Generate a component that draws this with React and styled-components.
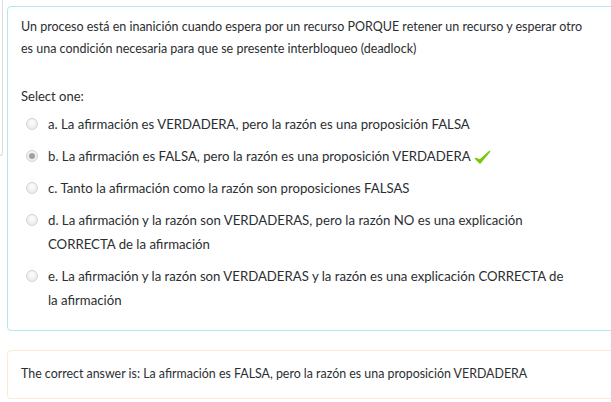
import React from 'react';
import styled, { createGlobalStyle } from 'styled-components';

const GlobalStyle = createGlobalStyle`
  html, body {
    margin: 0;
    padding: 0;
    background: #fff;
  }
  body {
    font-family: Lato, "Noto Sans", sans-serif;
    font-size: 13px;
    color: #2b2e31;
  }
`;

const Page = styled.div`
  display: flex;
  align-items: flex-start;
  width: 640px;
`;

const InfoEdge = styled.div`
  flex: 0 0 2px;
  height: 155px;
  border-right: 1px solid #dcdcdc;
  border-bottom: 1px solid #dcdcdc;
  border-bottom-right-radius: 3px;
`;

const Main = styled.div`
  flex: 1;
  margin-left: 4px;
  padding-top: 6px;
`;

const Formulation = styled.div`
  border: 1px solid #b4e8f0;
  border-radius: 4px;
  padding: 9px 12px 14px 13px;
`;

const QText = styled.p`
  margin: 0 0 25px;
  line-height: 22px;
  font-size: 12.5px;
  white-space: nowrap;
`;

const Prompt = styled.div`
  line-height: 22px;
  margin-bottom: 1px;
`;

const Option = styled.label`
  display: flex;
  align-items: flex-start;
  padding: 4px 0 4px 5px;
  line-height: 24px;
  font-size: 13.2px;
  width: 540px;
`;

const Radio = styled.span`
  flex: 0 0 12px;
  width: 12px;
  height: 12px;
  margin-top: 6px;
  margin-right: 10px;
  border-radius: 50%;
  box-sizing: border-box;
  border: 1px solid #d3d3d3;
  background: radial-gradient(circle at 50% 35%, #fdfdfd, #e6e6e6);
  position: relative;
  &::after {
    content: '';
    display: ${(p) => (p.checked ? 'block' : 'none')};
    position: absolute;
    left: 2px;
    top: 2px;
    width: 6px;
    height: 6px;
    border-radius: 50%;
    background: #a0a0a0;
  }
`;

const OptionText = styled.span`
  flex: 1;
`;

const Check = styled.svg`
  display: inline-block;
  vertical-align: -4px;
  margin-left: 3px;
`;

const Answer = styled.div`
  margin-top: 19px;
  border: 1px solid #fbebcf;
  border-radius: 4px;
  padding: 12px 13px 13px;
  line-height: 22px;
  font-size: 12.4px;
`;

const options = [
  { k: 'a', t: 'La afirmación es VERDADERA, pero la razón es una proposición FALSA' },
  { k: 'b', t: 'La afirmación es FALSA, pero la razón es una proposición VERDADERA', checked: true },
  { k: 'c', t: 'Tanto la afirmación como la razón son proposiciones FALSAS' },
  { k: 'd', t: 'La afirmación y la razón son VERDADERAS, pero la razón NO es una explicación CORRECTA de la afirmación' },
  { k: 'e', t: 'La afirmación y la razón son VERDADERAS y la razón es una explicación CORRECTA de la afirmación' },
];

export default function App() {
  return (
    <>
      <GlobalStyle />
      <Page>
        <InfoEdge />
        <Main>
          <Formulation>
            <QText>
              Un proceso está en inanición cuando espera por un recurso PORQUE retener un recurso y esperar otro
              <br />
              es una condición necesaria para que se presente interbloqueo (deadlock)
            </QText>
            <Prompt>Select one:</Prompt>
            {options.map((o) => (
              <Option key={o.k}>
                <Radio checked={o.checked} />
                <OptionText>
                  {`${o.k}. ${o.t}`}
                  {o.checked && (
                    <Check width="17" height="15" viewBox="0 0 17 15">
                      <path d="M1.5 8.5 L6 13 L15.5 1.5 L6 10 Z" fill="#7ac70c" stroke="#7ac70c" strokeWidth="1.6" strokeLinejoin="round" />
                    </Check>
                  )}
                </OptionText>
              </Option>
            ))}
          </Formulation>
          <Answer>
            The correct answer is: La afirmación es FALSA, pero la razón es una proposición VERDADERA
          </Answer>
        </Main>
      </Page>
    </>
  );
}
